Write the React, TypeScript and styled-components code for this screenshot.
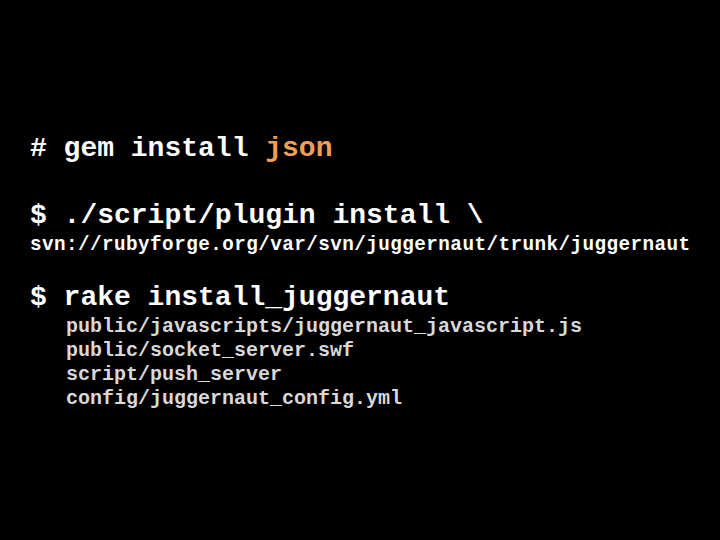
import styled, { createGlobalStyle } from "styled-components";

const GlobalStyle = createGlobalStyle`
  html, body {
    margin: 0;
    padding: 0;
    background: #000;
  }
`;

const installedFiles = [
  "public/javascripts/juggernaut_javascript.js",
  "public/socket_server.swf",
  "script/push_server",
  "config/juggernaut_config.yml",
];

const App = () => {
  return (
    <>
      <GlobalStyle />
      <Slide>
        <Command>
          # gem install <Highlight>json</Highlight>
        </Command>
        <Command gap={35}>$ ./script/plugin install \</Command>
        <Url>svn://rubyforge.org/var/svn/juggernaut/trunk/juggernaut</Url>
        <Command gap={25}>$ rake install_juggernaut</Command>
        <FileList>
          {installedFiles.map((file) => (
            <File key={file}>{file}</File>
          ))}
        </FileList>
      </Slide>
    </>
  );
};

export default App;

const Slide = styled.div`
  width: 720px;
  height: 540px;
  box-sizing: border-box;
  background: #000;
  padding: 133px 0 0 30px;
  display: flex;
  flex-direction: column;
  font-family: "Liberation Mono", "Courier New", monospace;
  color: #fff;
`;

const Command = styled.div<{ gap?: number }>`
  margin-top: ${({ gap }) => gap || 0}px;
  font-size: 28px;
  line-height: 32px;
  font-weight: bold;
  white-space: pre;
`;

const Highlight = styled.span`
  color: #f0a050;
`;

const Url = styled.div`
  margin-top: 1px;
  font-size: 19.3px;
  letter-spacing: 0.44px;
  line-height: 24px;
  font-weight: bold;
  white-space: pre;
`;

const FileList = styled.div`
  margin-top: 1px;
  padding-left: 36px;
  display: flex;
  flex-direction: column;
`;

const File = styled.div`
  font-size: 20px;
  line-height: 24px;
  font-weight: bold;
  color: #d8d8d8;
  white-space: pre;
`;
